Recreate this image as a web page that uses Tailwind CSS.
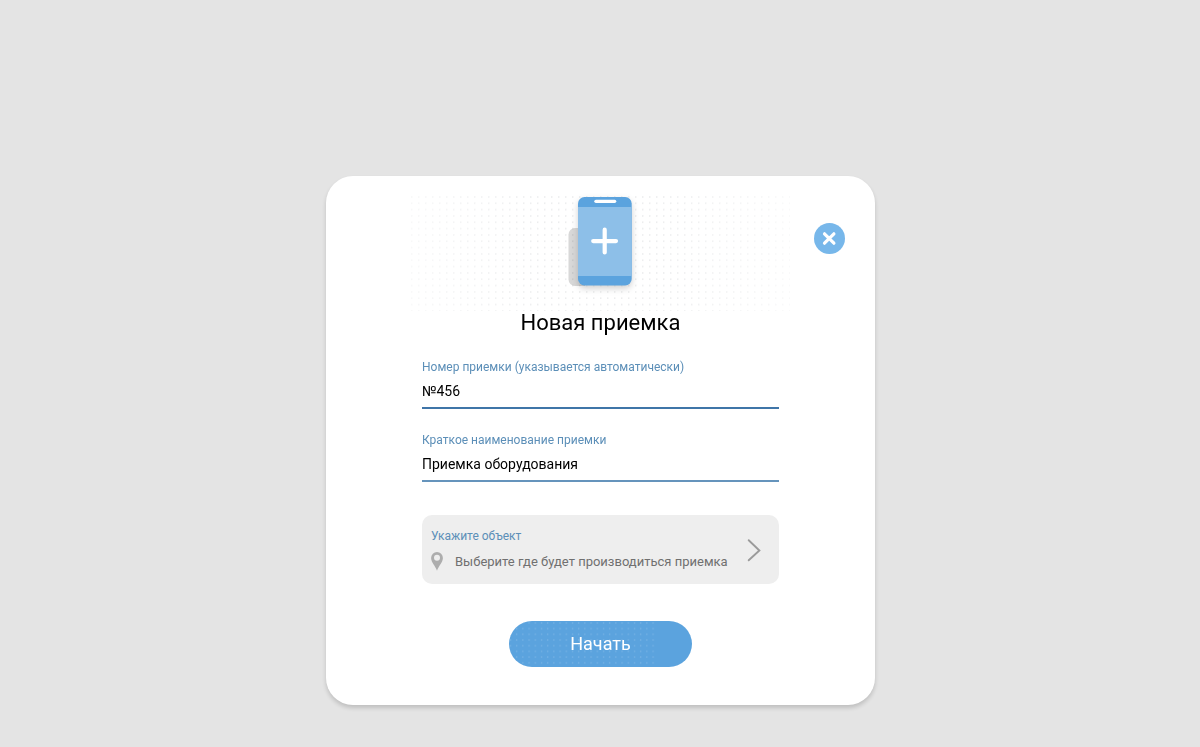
<!DOCTYPE html>
<html lang="ru">
  <head>
    <meta charset="UTF-8" />
    <meta name="viewport" content="width=device-width, initial-scale=1.0" />
    <script src="https://cdn.jsdelivr.net/npm/@tailwindcss/browser@4"></script>
    <title>Новая приемка</title>
  </head>

  <body class="bg-[#e4e4e4] font-['Roboto',sans-serif] text-black">
    <main class="min-h-screen flex items-start justify-center pt-44 pl-px pb-10">
      <form
        class="relative w-full max-w-[549px] flex flex-col items-center rounded-[27px] bg-white px-24 pt-5 pb-[38px] shadow-[0_3px_4px_rgba(0,0,0,0.16)]"
      >
        <!-- Close -->
        <button
          type="button"
          aria-label="Закрыть"
          class="absolute top-[47px] right-[30px] size-[31px] rounded-full bg-[#77b7ea] flex items-center justify-center"
        >
          <svg class="size-[31px]" viewBox="0 0 31 31" fill="none" stroke="#fff" stroke-width="3.2" stroke-linecap="round">
            <path d="M10.500 10.800l9.400 9.400M19.900 10.800l-9.400 9.400" />
          </svg>
        </button>

        <!-- Phone on dots -->
        <svg class="w-[379px] h-[115px] shrink-0 overflow-visible" viewBox="0 0 379 115" aria-hidden="true">
          <defs>
            <pattern id="dots" width="7" height="6.33" patternUnits="userSpaceOnUse">
              <circle cx="0.8" cy="1" r="0.75" fill="#e2e3e5" />
            </pattern>
            <linearGradient id="fade">
              <stop offset="0" stop-color="#fff" stop-opacity="0.4" />
              <stop offset="0.35" stop-color="#fff" />
              <stop offset="0.65" stop-color="#fff" />
              <stop offset="1" stop-color="#fff" stop-opacity="0.35" />
            </linearGradient>
            <mask id="edges"><rect width="379" height="115" fill="url(#fade)" /></mask>
            <clipPath id="phone"><rect x="167" y="1" width="53.7" height="88.5" rx="6.5" /></clipPath>
          </defs>
          <path d="M174 32h-10a6.5 6.5 0 0 0-6.5 6.5v45a6.5 6.5 0 0 0 6.5 6.5h10z" fill="#d8d8d8" />
          <rect width="379" height="115" fill="url(#dots)" mask="url(#edges)" style="mix-blend-mode: multiply" />
          <g style="filter: drop-shadow(0 3px 3px rgba(0, 0, 0, 0.18))">
            <g clip-path="url(#phone)">
              <rect x="167" y="1" width="54" height="89" fill="#5ba3de" />
              <rect x="167" y="11" width="54" height="69" fill="#8dbfe8" />
            </g>
          </g>
          <rect x="183.3" y="3.7" width="22" height="3.2" rx="1.6" fill="#fff" />
          <path d="M193.7 33.700v22.8M182.2 45.100h22.8" stroke="#fff" stroke-width="4.2" stroke-linecap="round" />
        </svg>

        <h1 class="text-[22px] leading-6">Новая приемка</h1>

        <!-- Fields -->
        <div class="w-full mt-6">
          <label for="number" class="block text-[12px] leading-4 text-[#5c8fb8]">Номер приемки (указывается автоматически)</label>
          <input
            type="text"
            id="number"
            value="№456"
            class="block w-full h-[34px] border-b-2 border-[#3f75a8] text-[14px] focus:outline-none"
          />
        </div>
        <div class="w-full mt-[23px]">
          <label for="name" class="block text-[12px] leading-4 text-[#5c8fb8]">Краткое наименование приемки</label>
          <input
            type="text"
            id="name"
            value="Приемка оборудования"
            class="block w-full h-[34px] border-b-2 border-[#6594bc] text-[14px] focus:outline-none"
          />
        </div>

        <!-- Object picker -->
        <button
          type="button"
          class="w-full h-[69px] mt-[33px] rounded-[10px] bg-[#eeeeee] pl-[9px] pr-[18px] flex items-center justify-between text-left"
        >
          <span class="flex flex-col gap-2">
            <span class="text-[12px] leading-4 text-[#5c8fb8]">Укажите объект</span>
            <span class="flex items-center gap-3 text-[13px] leading-5 text-[#707070]">
              <svg class="w-3 h-5" viewBox="0 0 12 20">
                <path d="M6 0a5.900 5.900 0 0 0-5.900 5.900C.1 10.200 4.500 14 6 18.700c1.500-4.700 5.900-8.500 5.900-12.800A5.900 5.900 0 0 0 6 0zm0 2.700a3 3 0 1 1 0 6 3 3 0 0 1 0-6z" fill="#adadad" />
              </svg>
              Выберите где будет производиться приемка
            </span>
          </span>
          <svg class="w-[14px] h-6" viewBox="0 0 14 24" fill="none" stroke="#9b9b9b" stroke-width="1.9" stroke-linecap="round">
            <path d="M1.700 2.200L12.400 12.500 1.700 22.300" />
          </svg>
        </button>

        <button
          type="submit"
          class="relative w-[183px] h-[46px] mt-[37px] overflow-hidden rounded-full bg-[#5ba3de] pb-px text-[18px] text-white"
        >
          <svg class="absolute inset-0 size-full" aria-hidden="true">
            <defs>
              <pattern id="btn-dots" width="6.2" height="5.7" patternUnits="userSpaceOnUse">
                <circle cx="1.500" cy="2" r="0.7" fill="#7cb5e5" />
              </pattern>
            </defs>
            <rect width="149" height="46" fill="url(#btn-dots)" />
          </svg>
          <span class="relative">Начать</span>
        </button>
      </form>
    </main>
  </body>
</html>
